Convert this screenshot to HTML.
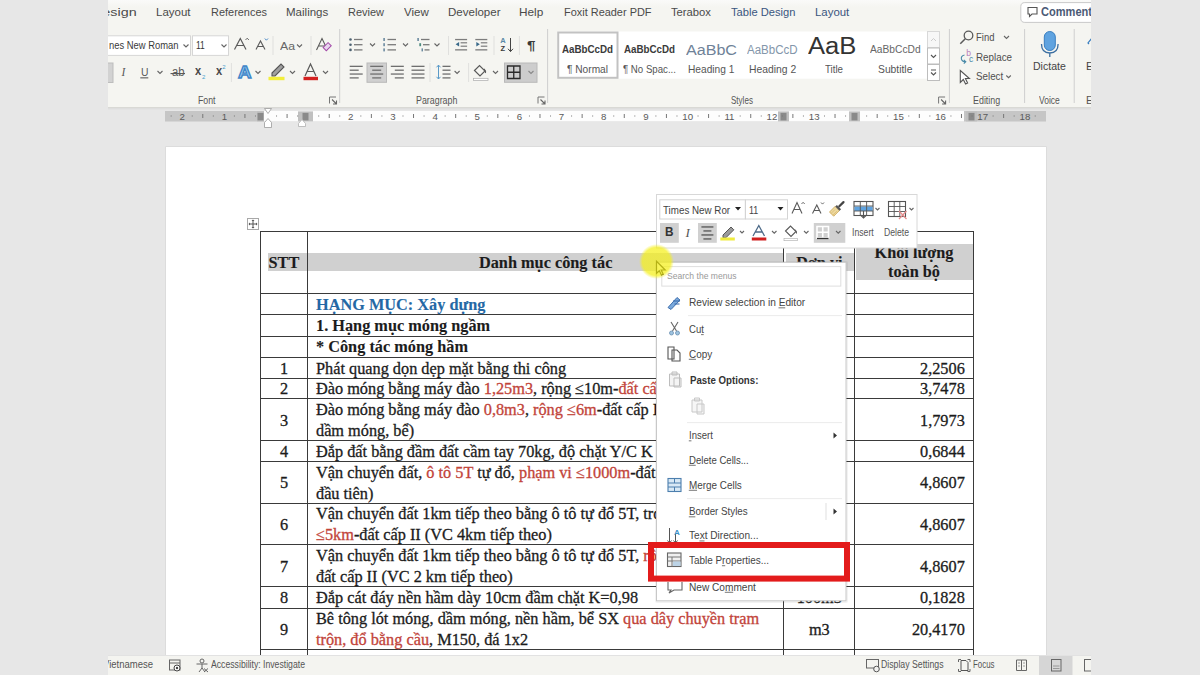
<!DOCTYPE html>
<html><head><meta charset="utf-8">
<style>
*{box-sizing:border-box;margin:0;padding:0}
html,body{width:1200px;height:675px;overflow:hidden;background:#e7e7e7;position:relative;font-family:"Liberation Sans",sans-serif}
.a{position:absolute}
.tx{position:absolute;white-space:pre}
#ribbon{left:108px;top:0;width:983px;height:107px;background:#f5f5f1;box-shadow:0 1px 0 #d9d9d5,0 2px 0 #dedede,0 3px 0 #e3e3e3}
#ruler{left:165px;top:111px;width:881px;height:10px;background:#c9c9c9}
#page{left:165.5px;top:147px;width:880.5px;height:528px;background:#fff;box-shadow:0 0 0 0.6px #d4d4d4}
.hl{background:#d0d0d0}
.tl{position:absolute;background:#3a3a3a}
.tt{position:absolute;font-family:"Liberation Serif",serif;font-size:16.3px;color:#1c1c1c;white-space:pre;line-height:21px;-webkit-text-stroke:0.3px currentColor}
.r{color:#c2443a}
.b{font-weight:bold;-webkit-text-stroke:0.1px currentColor}
#status{left:108px;top:655px;width:983px;height:20px;background:#f1f1ef}
.st{position:absolute;font-size:10.5px;color:#555;white-space:pre;top:4px}
</style></head><body>
<div id="ribbon" class="a" style="overflow:hidden"><div class="a" style="left:-108px;top:0;width:1200px;height:107px"><svg class="a" style="left:0;top:0" width="1200" height="130"><defs><linearGradient id="tg" x1="0" y1="0" x2="0" y2="1"><stop offset="0" stop-color="#fafaf9"/><stop offset="1" stop-color="#f5f5f1"/></linearGradient></defs><rect x="108" y="0" width="983" height="7" fill="url(#tg)"/><rect x="95.5" y="35.8" width="95" height="19.6" fill="#fff" stroke="#d6d6d6"/><rect x="192.5" y="35.8" width="36" height="19.6" fill="#fff" stroke="#d6d6d6"/><rect x="178.3" y="37" width="11.7" height="17.5" fill="#fff"/><path d="M183.5 44.5 l2.5 2.5 l2.5 -2.5" fill="none" stroke="#666" stroke-width="1.1"/><path d="M221.5 44.5 l2.5 2.5 l2.5 -2.5" fill="none" stroke="#666" stroke-width="1.1"/><path d="M234.5 49.5 L240.3 38.5 L246 49.5 M236.6 45.5 h7.4" fill="none" stroke="#5a5a5a" stroke-width="1.2"/><path d="M245.5 40 l1.7 -1.8 l1.7 1.8" fill="none" stroke="#5a5a5a" stroke-width="0.9"/><path d="M256 49.5 L260.5 41 L265 49.5 M257.7 46.5 h5.6" fill="none" stroke="#5a5a5a" stroke-width="1.1"/><path d="M264.8 38.5 l1.6 1.7 l1.6 -1.7" fill="none" stroke="#3c7fc2" stroke-width="0.9"/><rect x="272.5" y="36" width="1" height="19" fill="#e0e0de"/><path d="M297 44.5 l2.5 2.5 l2.5 -2.5" fill="none" stroke="#666" stroke-width="1.1"/><rect x="310.5" y="36" width="1" height="19" fill="#e0e0de"/><path d="M316.5 50 L322 38.5 L327.5 50 M318.5 46 h7" fill="none" stroke="#5a5a5a" stroke-width="1.1"/><rect x="325" y="43" width="4.5" height="7" transform="rotate(45 327 46.5)" fill="#e9d5ef" stroke="#a34aa8" stroke-width="1"/><rect x="100" y="63" width="13" height="19.5" fill="#d2d2d2" stroke="#bdbdbd"/><rect x="140.3" y="77.3" width="8" height="1.1" fill="#5a5a5a"/><path d="M157.5 71 l2.5 2.5 l2.5 -2.5" fill="none" stroke="#666" stroke-width="1.1"/><rect x="170.5" y="73" width="14.5" height="1.1" fill="#5a5a5a"/><rect x="230.9" y="63" width="1" height="19" fill="#e0e0de"/><path d="M255.5 71 l2.5 2.5 l2.5 -2.5" fill="none" stroke="#666" stroke-width="1.1"/><path d="M272 73 l9-9 l3 3 l-9 9 h-3z" fill="#a0a0a0" stroke="#555" stroke-width="1.1"/><rect x="268.5" y="76.8" width="16" height="3.4" fill="#f2ee3b"/><path d="M290 71 l2.5 2.5 l2.5 -2.5" fill="none" stroke="#666" stroke-width="1.1"/><path d="M305 76 L310.5 64 L316 76 M307 71.5 h7" fill="none" stroke="#5a5a5a" stroke-width="1.2"/><rect x="303.5" y="76.8" width="14.5" height="3.4" fill="#d32020"/><path d="M323 71 l2.5 2.5 l2.5 -2.5" fill="none" stroke="#666" stroke-width="1.1"/><path d="M329.5 103.5 v-6.5 h6.5" fill="none" stroke="#777" stroke-width="1"/><path d="M332.0 99.5 l4.5 4.5 M336.5 100.5 v3.5 h-3.5" fill="none" stroke="#666" stroke-width="1.1"/><rect x="339.2" y="29" width="1" height="74" fill="#cfcfcf"/><circle cx="350.5" cy="39.5" r="1.3" fill="#4d6272"/><rect x="354" y="38.85" width="8.5" height="1.3" fill="#7a7a7a"/><circle cx="350.5" cy="44.7" r="1.3" fill="#4d6272"/><rect x="354" y="44.050000000000004" width="8.5" height="1.3" fill="#7a7a7a"/><circle cx="350.5" cy="49.9" r="1.3" fill="#4d6272"/><rect x="354" y="49.25" width="8.5" height="1.3" fill="#7a7a7a"/><path d="M370 43.5 l2.5 2.5 l2.5 -2.5" fill="none" stroke="#666" stroke-width="1.1"/><rect x="383.3" y="38.0" width="1.6" height="3" fill="#6b8aa0"/><rect x="387.5" y="38.85" width="8.5" height="1.3" fill="#7a7a7a"/><rect x="383.3" y="43.2" width="1.6" height="3" fill="#6b8aa0"/><rect x="387.5" y="44.050000000000004" width="8.5" height="1.3" fill="#7a7a7a"/><rect x="383.3" y="48.4" width="1.6" height="3" fill="#6b8aa0"/><rect x="387.5" y="49.25" width="8.5" height="1.3" fill="#7a7a7a"/><path d="M403 43.5 l2.5 2.5 l2.5 -2.5" fill="none" stroke="#666" stroke-width="1.1"/><rect x="417.3" y="38" width="1.6" height="3" fill="#6b8aa0"/><rect x="421" y="38.85" width="8.5" height="1.3" fill="#7a7a7a"/><rect x="419.3" y="43.2" width="1.8" height="3" fill="#4d8a80"/><rect x="423" y="44.05" width="6.5" height="1.3" fill="#7a7a7a"/><rect x="421.5" y="48.4" width="1.5" height="3" fill="#6b8aa0"/><rect x="424.5" y="49.25" width="5" height="1.3" fill="#7a7a7a"/><path d="M434.5 43.5 l2.5 2.5 l2.5 -2.5" fill="none" stroke="#666" stroke-width="1.1"/><rect x="448.0" y="36" width="1" height="19" fill="#e0e0de"/><rect x="455.1" y="38.9" width="12" height="1.3" fill="#7d7d7d"/><rect x="460.6" y="42.2" width="6.5" height="1.2" fill="#7d7d7d"/><rect x="460.6" y="45.6" width="6.5" height="1.2" fill="#7d7d7d"/><rect x="455.1" y="49.2" width="12" height="1.3" fill="#7d7d7d"/><path d="M459.1 42 v4.5 l-3.5 -2.25 z" fill="#3a6a8a"/><rect x="475.3" y="38.9" width="12" height="1.3" fill="#7d7d7d"/><rect x="480.8" y="42.2" width="6.5" height="1.2" fill="#7d7d7d"/><rect x="480.8" y="45.6" width="6.5" height="1.2" fill="#7d7d7d"/><rect x="475.3" y="49.2" width="12" height="1.3" fill="#7d7d7d"/><path d="M476.3 42 v4.5 l3.5 -2.25 z" fill="#3a6a8a"/><rect x="493.5" y="36" width="1" height="19" fill="#e0e0de"/><path d="M510.5 38 v13.5 M508 48.8 l2.5 2.8 l2.5 -2.8" fill="none" stroke="#444" stroke-width="1"/><rect x="518.9" y="36" width="1" height="19" fill="#e0e0de"/><rect x="349.7" y="65.7" width="13" height="1.3" fill="#6f6f6f"/><rect x="349.7" y="69.55" width="9" height="1.3" fill="#6f6f6f"/><rect x="349.7" y="73.4" width="13" height="1.3" fill="#6f6f6f"/><rect x="349.7" y="77.25" width="9" height="1.3" fill="#6f6f6f"/><rect x="367" y="63" width="19.5" height="19.3" fill="#d0d0d0" stroke="#b9b9b9"/><rect x="370.2" y="65.7" width="13" height="1.3" fill="#6f6f6f"/><rect x="372.2" y="69.55" width="9" height="1.3" fill="#6f6f6f"/><rect x="370.2" y="73.4" width="13" height="1.3" fill="#6f6f6f"/><rect x="372.2" y="77.25" width="9" height="1.3" fill="#6f6f6f"/><rect x="390.8" y="65.7" width="13" height="1.3" fill="#6f6f6f"/><rect x="394.8" y="69.55" width="9" height="1.3" fill="#6f6f6f"/><rect x="390.8" y="73.4" width="13" height="1.3" fill="#6f6f6f"/><rect x="394.8" y="77.25" width="9" height="1.3" fill="#6f6f6f"/><rect x="411.5" y="65.7" width="13" height="1.3" fill="#6f6f6f"/><rect x="411.5" y="69.55" width="13" height="1.3" fill="#6f6f6f"/><rect x="411.5" y="73.4" width="13" height="1.3" fill="#6f6f6f"/><rect x="411.5" y="77.25" width="13" height="1.3" fill="#6f6f6f"/><rect x="429.5" y="63" width="1" height="19" fill="#e0e0de"/><path d="M438.5 65 v14 M436.5 67.3 l2 -2.2 l2 2.2 M436.5 76.8 l2 2.2 l2 -2.2" fill="none" stroke="#5a9ac8" stroke-width="1"/><rect x="442.5" y="65.7" width="8" height="1.3" fill="#6f6f6f"/><rect x="442.5" y="69.55" width="8" height="1.3" fill="#6f6f6f"/><rect x="442.5" y="73.4" width="8" height="1.3" fill="#6f6f6f"/><rect x="442.5" y="77.25" width="8" height="1.3" fill="#6f6f6f"/><path d="M454.6 71 l2.5 2.5 l2.5 -2.5" fill="none" stroke="#666" stroke-width="1.1"/><rect x="468.1" y="63" width="1" height="19" fill="#e0e0de"/><path d="M474.5 70.5 l5 -5 l5.5 5.5 l-5 5 z" fill="none" stroke="#5a5a5a" stroke-width="1.2"/><path d="M484 69 q2 2 1.5 4" fill="none" stroke="#5a5a5a" stroke-width="1.1"/><rect x="473.5" y="78.3" width="14.5" height="2.3" fill="#fff" stroke="#aaa" stroke-width="0.7"/><path d="M493 71 l2.5 2.5 l2.5 -2.5" fill="none" stroke="#666" stroke-width="1.1"/><rect x="504.5" y="63" width="32.5" height="19.3" fill="#cdcdcd" stroke="#b9b9b9"/><path d="M507.5 66 h12.5 v12.5 h-12.5 z M513.75 66 v12.5 M507.5 72.25 h12.5" fill="none" stroke="#2b2b2b" stroke-width="1.3"/><path d="M528.5 71 l2.5 2.5 l2.5 -2.5" fill="none" stroke="#888" stroke-width="1.1"/><path d="M538 103.5 v-6.5 h6.5" fill="none" stroke="#777" stroke-width="1"/><path d="M540.5 99.5 l4.5 4.5 M545 100.5 v3.5 h-3.5" fill="none" stroke="#666" stroke-width="1.1"/><rect x="547.1" y="29" width="1" height="74" fill="#cfcfcf"/><rect x="557.2" y="31.5" width="370" height="47.2" fill="#fff"/><rect x="558.2" y="32.5" width="59.3" height="45.3" fill="none" stroke="#c2c2c2" stroke-width="2"/><rect x="737" y="38" width="10" height="20" fill="#fff"/><rect x="797.6" y="38" width="9" height="20" fill="#fff"/><rect x="927.5" y="31.5" width="12" height="16" fill="#f7f7f7" stroke="#d8d8d8"/><rect x="927.5" y="48" width="12" height="16" fill="#fff" stroke="#bdbdbd"/><rect x="927.5" y="64.5" width="12" height="16" fill="#fff" stroke="#bdbdbd"/><path d="M931 41 l2.5 -2.5 l2.5 2.5" fill="none" stroke="#ccc" stroke-width="1"/><path d="M931 55 l2.5 2.5 l2.5 -2.5" fill="none" stroke="#555" stroke-width="1.1"/><path d="M931 70 h5 M931 72.5 l2.5 2.5 l2.5 -2.5" fill="none" stroke="#555" stroke-width="1.1"/><path d="M938.6 103.5 v-6.5 h6.5" fill="none" stroke="#777" stroke-width="1"/><path d="M941.1 99.5 l4.5 4.5 M945.6 100.5 v3.5 h-3.5" fill="none" stroke="#666" stroke-width="1.1"/><rect x="948.9" y="29" width="1" height="74" fill="#cfcfcf"/><circle cx="968.5" cy="35.5" r="4.3" fill="none" stroke="#5a5a5a" stroke-width="1.3"/><path d="M965.3 38.8 l-5 5" stroke="#5a5a5a" stroke-width="1.5"/><path d="M1004 36 l2.5 2.5 l2.5 -2.5" fill="none" stroke="#666" stroke-width="1.1"/><path d="M964.5 55 q-4 1 -3 4.5 q0.8 2.2 4.2 2.2 M963.8 59.8 l2 1.9 l-2 1.9" fill="none" stroke="#4a8aa8" stroke-width="1.1"/><path d="M960.3 70.5 v12 l3 -3 l2.3 4.5 l2 -1 l-2.2 -4.5 h4 z" fill="#fff" stroke="#555" stroke-width="1.1"/><path d="M1006.3 75.5 l2.25 2.25 l2.25 -2.25" fill="none" stroke="#666" stroke-width="1.1"/><rect x="1024.1" y="29" width="1" height="74" fill="#cfcfcf"/><rect x="1044.3" y="31.5" width="11" height="19" rx="5.5" fill="#5fa3e0" stroke="#3a7fc0" stroke-width="1"/><path d="M1041.5 44 q0 9 8.3 9 q8.3 0 8.3 -9 M1049.8 53 v4" fill="none" stroke="#3b6ea0" stroke-width="1.3"/><rect x="1073.7" y="29" width="1" height="74" fill="#cfcfcf"/><path d="M1092 38 l-4 5 l1 1" fill="none" stroke="#3a7fc0" stroke-width="1.2"/><rect x="1020.8" y="2.6" width="90" height="19.8" rx="4" fill="#fff" stroke="#c9c9c9"/><path d="M1028 7.5 h9 v6.5 h-5 l-2.5 2.5 v-2.5 h-1.5 z" fill="none" stroke="#555" stroke-width="1.1"/></svg><div class='tx' style="left:92px;top:5.89px;font-family:'Liberation Sans';font-size:11.3px;font-weight:normal;color:#4a4a4a;line-height:12.99px;transform:scaleX(1.2709);transform-origin:0 0;">Design</div>
<div class='tx' style="left:155.5px;top:5.89px;font-family:'Liberation Sans';font-size:11.3px;font-weight:normal;color:#4a4a4a;line-height:12.99px;transform:scaleX(1.0170);transform-origin:0 0;">Layout</div>
<div class='tx' style="left:210.5px;top:5.89px;font-family:'Liberation Sans';font-size:11.3px;font-weight:normal;color:#4a4a4a;line-height:12.99px;transform:scaleX(0.9692);transform-origin:0 0;">References</div>
<div class='tx' style="left:285.7px;top:5.89px;font-family:'Liberation Sans';font-size:11.3px;font-weight:normal;color:#4a4a4a;line-height:12.99px;transform:scaleX(1.0208);transform-origin:0 0;">Mailings</div>
<div class='tx' style="left:348px;top:5.89px;font-family:'Liberation Sans';font-size:11.3px;font-weight:normal;color:#4a4a4a;line-height:12.99px;transform:scaleX(0.9717);transform-origin:0 0;">Review</div>
<div class='tx' style="left:403.5px;top:5.89px;font-family:'Liberation Sans';font-size:11.3px;font-weight:normal;color:#4a4a4a;line-height:12.99px;transform:scaleX(1.0207);transform-origin:0 0;">View</div>
<div class='tx' style="left:447.5px;top:5.89px;font-family:'Liberation Sans';font-size:11.3px;font-weight:normal;color:#4a4a4a;line-height:12.99px;transform:scaleX(1.0194);transform-origin:0 0;">Developer</div>
<div class='tx' style="left:518.8px;top:5.89px;font-family:'Liberation Sans';font-size:11.3px;font-weight:normal;color:#4a4a4a;line-height:12.99px;transform:scaleX(1.0459);transform-origin:0 0;">Help</div>
<div class='tx' style="left:563.8px;top:5.89px;font-family:'Liberation Sans';font-size:11.3px;font-weight:normal;color:#4a4a4a;line-height:12.99px;transform:scaleX(0.9679);transform-origin:0 0;">Foxit Reader PDF</div>
<div class='tx' style="left:671.2px;top:5.89px;font-family:'Liberation Sans';font-size:11.3px;font-weight:normal;color:#4a4a4a;line-height:12.99px;transform:scaleX(0.9949);transform-origin:0 0;">Terabox</div>
<div class='tx' style="left:731.3px;top:5.89px;font-family:'Liberation Sans';font-size:11.3px;font-weight:normal;color:#3a5680;line-height:12.99px;transform:scaleX(0.9876);transform-origin:0 0;">Table Design</div>
<div class='tx' style="left:815px;top:5.89px;font-family:'Liberation Sans';font-size:11.3px;font-weight:normal;color:#3a5680;line-height:12.99px;transform:scaleX(1.0111);transform-origin:0 0;">Layout</div>
<div class='tx' style="left:109px;top:39.46px;font-family:'Liberation Sans';font-size:11px;font-weight:normal;color:#3a3a3a;line-height:12.65px;transform:scaleX(0.8546);transform-origin:0 0;">nes New Roman</div>
<div class='tx' style="left:195.8px;top:39.46px;font-family:'Liberation Sans';font-size:11px;font-weight:normal;color:#333;line-height:12.65px;transform:scaleX(0.7705);transform-origin:0 0;">11</div>
<div class='tx' style="left:279.5px;top:39.66px;font-family:'Liberation Sans';font-size:11px;font-weight:normal;color:#666;line-height:12.65px;transform:scaleX(1.1137);transform-origin:0 0;">Aa</div>
<div class='tx' style="left:121.5px;top:65.51px;font-family:'Liberation Serif';font-size:11.5px;font-weight:normal;color:#5a5a5a;line-height:13.22px;font-style:italic">I</div>
<div class='tx' style="left:140.5px;top:66.13px;font-family:'Liberation Sans';font-size:10.5px;font-weight:normal;color:#5a5a5a;line-height:12.07px;transform:scaleX(0.9877);transform-origin:0 0;">U</div>
<div class='tx' style="left:171.5px;top:65.48px;font-family:'Liberation Sans';font-size:12.5px;font-weight:normal;color:#5a5a5a;line-height:14.37px;transform:scaleX(0.8989);transform-origin:0 0;">ab</div>
<div class='tx' style="left:195.3px;top:65.44px;font-family:'Liberation Sans';font-size:12px;font-weight:bold;color:#4a4a4a;line-height:13.8px;transform:scaleX(0.9271);transform-origin:0 0;">x</div>
<div class='tx' style="left:202px;top:73.97px;font-family:'Liberation Sans';font-size:6px;font-weight:normal;color:#4a9fcf;line-height:6.9px;">2</div>
<div class='tx' style="left:215.9px;top:65.44px;font-family:'Liberation Sans';font-size:12px;font-weight:bold;color:#4a4a4a;line-height:13.8px;transform:scaleX(0.9271);transform-origin:0 0;">x</div>
<div class='tx' style="left:222.3px;top:63.97px;font-family:'Liberation Sans';font-size:6px;font-weight:normal;color:#4a9fcf;line-height:6.9px;">2</div>
<div class='tx' style="left:237.5px;top:62.83px;font-family:'Liberation Sans';font-size:17px;font-weight:bold;color:#9fd0f5;line-height:19.55px;transform:scaleX(1.0992);transform-origin:0 0;-webkit-text-stroke:1.3px #3f86c8">A</div>
<div class='tx' style="left:197.7px;top:93.83px;font-family:'Liberation Sans';font-size:10.5px;font-weight:normal;color:#555;line-height:12.07px;transform:scaleX(0.8327);transform-origin:0 0;">Font</div>
<div class='tx' style="left:500.3px;top:36.89px;font-family:'Liberation Sans';font-size:7.5px;font-weight:bold;color:#5a8aa8;line-height:8.62px;">A</div>
<div class='tx' style="left:500.5px;top:44.89px;font-family:'Liberation Sans';font-size:7.5px;font-weight:bold;color:#3a3a3a;line-height:8.62px;">Z</div>
<div class='tx' style="left:527px;top:38.98px;font-family:'Liberation Sans';font-size:12.5px;font-weight:bold;color:#3a3a3a;line-height:14.37px;transform:scaleX(1.2225);transform-origin:0 0;">¶</div>
<div class='tx' style="left:415.6px;top:93.83px;font-family:'Liberation Sans';font-size:10.5px;font-weight:normal;color:#555;line-height:12.07px;transform:scaleX(0.8441);transform-origin:0 0;">Paragraph</div>
<div class='tx' style="left:562.4px;top:42.85px;font-family:'Liberation Sans';font-size:10.8px;font-weight:bold;color:#3a3a3a;line-height:12.42px;transform:scaleX(0.9062);transform-origin:0 0;">AaBbCcDd</div>
<div class='tx' style="left:567px;top:63.33px;font-family:'Liberation Sans';font-size:10.5px;font-weight:normal;color:#555;line-height:12.07px;transform:scaleX(0.9668);transform-origin:0 0;">¶ Normal</div>
<div class='tx' style="left:624.3px;top:42.85px;font-family:'Liberation Sans';font-size:10.8px;font-weight:bold;color:#3a3a3a;line-height:12.42px;transform:scaleX(0.9044);transform-origin:0 0;">AaBbCcDd</div>
<div class='tx' style="left:622.7px;top:63.33px;font-family:'Liberation Sans';font-size:10.5px;font-weight:normal;color:#555;line-height:12.07px;transform:scaleX(0.9202);transform-origin:0 0;">¶ No Spac...</div>
<div class='tx' style="left:686px;top:40.52px;font-family:'Liberation Sans';font-size:15.5px;font-weight:normal;color:#6f8298;line-height:17.82px;transform:scaleX(1.0382);transform-origin:0 0;">AaBbC</div>
<div class='tx' style="left:687.6px;top:63.33px;font-family:'Liberation Sans';font-size:10.5px;font-weight:normal;color:#555;line-height:12.07px;transform:scaleX(0.9692);transform-origin:0 0;">Heading 1</div>
<div class='tx' style="left:747px;top:43.54px;font-family:'Liberation Sans';font-size:12px;font-weight:normal;color:#8396aa;line-height:13.8px;transform:scaleX(0.9585);transform-origin:0 0;">AaBbCcD</div>
<div class='tx' style="left:748.8px;top:63.33px;font-family:'Liberation Sans';font-size:10.5px;font-weight:normal;color:#555;line-height:12.07px;transform:scaleX(0.9859);transform-origin:0 0;">Heading 2</div>
<div class='tx' style="left:808px;top:32.85px;font-family:'Liberation Sans';font-size:23.5px;font-weight:normal;color:#333;line-height:27.02px;transform:scaleX(1.0896);transform-origin:0 0;">AaB</div>
<div class='tx' style="left:825px;top:63.33px;font-family:'Liberation Sans';font-size:10.5px;font-weight:normal;color:#555;line-height:12.07px;transform:scaleX(0.9253);transform-origin:0 0;">Title</div>
<div class='tx' style="left:870.4px;top:42.86px;font-family:'Liberation Sans';font-size:11px;font-weight:normal;color:#666;line-height:12.65px;transform:scaleX(0.9298);transform-origin:0 0;">AaBbCcDd</div>
<div class='tx' style="left:878px;top:63.33px;font-family:'Liberation Sans';font-size:10.5px;font-weight:normal;color:#555;line-height:12.07px;transform:scaleX(0.9820);transform-origin:0 0;">Subtitle</div>
<div class='tx' style="left:730.5px;top:93.83px;font-family:'Liberation Sans';font-size:10.5px;font-weight:normal;color:#555;line-height:12.07px;transform:scaleX(0.7659);transform-origin:0 0;">Styles</div>
<div class='tx' style="left:975.8px;top:30.96px;font-family:'Liberation Sans';font-size:11px;font-weight:normal;color:#4f4f4f;line-height:12.65px;transform:scaleX(0.8596);transform-origin:0 0;">Find</div>
<div class='tx' style="left:966.3px;top:48.67px;font-family:'Liberation Sans';font-size:8.5px;font-weight:normal;color:#b87ab8;line-height:9.77px;">b</div>
<div class='tx' style="left:969px;top:54.67px;font-family:'Liberation Sans';font-size:8.5px;font-weight:normal;color:#4a8aa8;line-height:9.77px;">c</div>
<div class='tx' style="left:975.8px;top:50.86px;font-family:'Liberation Sans';font-size:11px;font-weight:normal;color:#4f4f4f;line-height:12.65px;transform:scaleX(0.8920);transform-origin:0 0;">Replace</div>
<div class='tx' style="left:975.8px;top:70.46px;font-family:'Liberation Sans';font-size:11px;font-weight:normal;color:#4f4f4f;line-height:12.65px;transform:scaleX(0.8895);transform-origin:0 0;">Select</div>
<div class='tx' style="left:973.4px;top:93.83px;font-family:'Liberation Sans';font-size:10.5px;font-weight:normal;color:#555;line-height:12.07px;transform:scaleX(0.8471);transform-origin:0 0;">Editing</div>
<div class='tx' style="left:1033.4px;top:60.06px;font-family:'Liberation Sans';font-size:11px;font-weight:normal;color:#444;line-height:12.65px;transform:scaleX(0.9577);transform-origin:0 0;">Dictate</div>
<div class='tx' style="left:1039px;top:93.83px;font-family:'Liberation Sans';font-size:10.5px;font-weight:normal;color:#555;line-height:12.07px;transform:scaleX(0.8097);transform-origin:0 0;">Voice</div>
<div class='tx' style="left:1086px;top:60.06px;font-family:'Liberation Sans';font-size:11px;font-weight:normal;color:#444;line-height:12.65px;">E</div>
<div class='tx' style="left:1086px;top:93.83px;font-family:'Liberation Sans';font-size:10.5px;font-weight:normal;color:#555;line-height:12.07px;">E</div>
<div class='tx' style="left:1040.8px;top:5.74px;font-family:'Liberation Sans';font-size:12px;font-weight:bold;color:#4b5a76;line-height:13.8px;transform:scaleX(0.9215);transform-origin:0 0;">Comment</div></div></div>
<svg class="a" style="left:0;top:0" width="1200" height="675"><rect x="165" y="111" width="881" height="10.5" fill="#c6c6c6"/><rect x="264" y="111" width="700" height="10.5" fill="#fdfdfd"/><rect x="257" y="111.4" width="7" height="10" fill="#c0c0c0"/><rect x="257.5" y="112.9" width="6" height="7.5" fill="#8a8a8a"/><rect x="298" y="111.4" width="15" height="10" fill="#c0c0c0"/><rect x="302.5" y="112.9" width="6" height="7.5" fill="#8a8a8a"/><rect x="778" y="111.4" width="11" height="10" fill="#c0c0c0"/><rect x="780.5" y="112.9" width="6" height="7.5" fill="#8a8a8a"/><rect x="849" y="111.4" width="11" height="10" fill="#c0c0c0"/><rect x="851.5" y="112.9" width="6" height="7.5" fill="#8a8a8a"/><rect x="966" y="111.4" width="11" height="10" fill="#c0c0c0"/><rect x="968.5" y="112.9" width="6" height="7.5" fill="#8a8a8a"/><path d="M264.5 108.5 h7 l-3.5 5 z M264.5 127.5 h7 v-5 l-3.5 -4 l-3.5 4 z" fill="#fff" stroke="#9a9a9a" stroke-width="0.8"/><path d="M298.5 126.5 h7 v-3 l-3.5 -4 l-3.5 4 z" fill="#fff" stroke="#b0b0b0" stroke-width="0.8"/><rect x="170.66250000000002" y="115.5" width="1" height="1" fill="#777"/><rect x="191.73749999999998" y="115.5" width="1" height="1" fill="#777"/><rect x="202.27499999999998" y="114" width="1" height="4" fill="#777"/><rect x="212.8125" y="115.5" width="1" height="1" fill="#777"/><rect x="233.8875" y="115.5" width="1" height="1" fill="#777"/><rect x="244.42499999999998" y="114" width="1" height="4" fill="#777"/><rect x="254.96249999999998" y="115.5" width="1" height="1" fill="#777"/><rect x="276.0375" y="115.5" width="1" height="1" fill="#777"/><rect x="286.575" y="114" width="1" height="4" fill="#777"/><rect x="297.1125" y="115.5" width="1" height="1" fill="#777"/><rect x="318.1875" y="115.5" width="1" height="1" fill="#777"/><rect x="328.72499999999997" y="114" width="1" height="4" fill="#777"/><rect x="339.2625" y="115.5" width="1" height="1" fill="#777"/><rect x="360.33750000000003" y="115.5" width="1" height="1" fill="#777"/><rect x="370.875" y="114" width="1" height="4" fill="#777"/><rect x="381.4125" y="115.5" width="1" height="1" fill="#777"/><rect x="402.4875" y="115.5" width="1" height="1" fill="#777"/><rect x="413.025" y="114" width="1" height="4" fill="#777"/><rect x="423.5625" y="115.5" width="1" height="1" fill="#777"/><rect x="444.63750000000005" y="115.5" width="1" height="1" fill="#777"/><rect x="455.175" y="114" width="1" height="4" fill="#777"/><rect x="465.71250000000003" y="115.5" width="1" height="1" fill="#777"/><rect x="486.7875" y="115.5" width="1" height="1" fill="#777"/><rect x="497.325" y="114" width="1" height="4" fill="#777"/><rect x="507.8625" y="115.5" width="1" height="1" fill="#777"/><rect x="528.9375" y="115.5" width="1" height="1" fill="#777"/><rect x="539.475" y="114" width="1" height="4" fill="#777"/><rect x="550.0124999999999" y="115.5" width="1" height="1" fill="#777"/><rect x="571.0875" y="115.5" width="1" height="1" fill="#777"/><rect x="581.625" y="114" width="1" height="4" fill="#777"/><rect x="592.1624999999999" y="115.5" width="1" height="1" fill="#777"/><rect x="613.2375000000001" y="115.5" width="1" height="1" fill="#777"/><rect x="623.7750000000001" y="114" width="1" height="4" fill="#777"/><rect x="634.3125" y="115.5" width="1" height="1" fill="#777"/><rect x="655.3874999999999" y="115.5" width="1" height="1" fill="#777"/><rect x="665.925" y="114" width="1" height="4" fill="#777"/><rect x="676.4624999999999" y="115.5" width="1" height="1" fill="#777"/><rect x="697.5375" y="115.5" width="1" height="1" fill="#777"/><rect x="708.075" y="114" width="1" height="4" fill="#777"/><rect x="718.6125" y="115.5" width="1" height="1" fill="#777"/><rect x="739.6875" y="115.5" width="1" height="1" fill="#777"/><rect x="750.225" y="114" width="1" height="4" fill="#777"/><rect x="760.7624999999999" y="115.5" width="1" height="1" fill="#777"/><rect x="781.8375" y="115.5" width="1" height="1" fill="#777"/><rect x="792.375" y="114" width="1" height="4" fill="#777"/><rect x="802.9124999999999" y="115.5" width="1" height="1" fill="#777"/><rect x="823.9875" y="115.5" width="1" height="1" fill="#777"/><rect x="834.525" y="114" width="1" height="4" fill="#777"/><rect x="845.0624999999999" y="115.5" width="1" height="1" fill="#777"/><rect x="866.1375" y="115.5" width="1" height="1" fill="#777"/><rect x="876.6750000000001" y="114" width="1" height="4" fill="#777"/><rect x="887.2125" y="115.5" width="1" height="1" fill="#777"/><rect x="908.2875" y="115.5" width="1" height="1" fill="#777"/><rect x="918.825" y="114" width="1" height="4" fill="#777"/><rect x="929.3625" y="115.5" width="1" height="1" fill="#777"/><rect x="950.4375" y="115.5" width="1" height="1" fill="#777"/><rect x="960.975" y="114" width="1" height="4" fill="#777"/><rect x="971.5124999999999" y="115.5" width="1" height="1" fill="#777"/><rect x="992.5875" y="115.5" width="1" height="1" fill="#777"/><rect x="1003.125" y="114" width="1" height="4" fill="#777"/><rect x="1013.6624999999999" y="115.5" width="1" height="1" fill="#777"/><rect x="1034.7374999999997" y="115.5" width="1" height="1" fill="#777"/></svg><div class='tx' style="left:179.5px;top:111.36px;font-family:'Liberation Sans';font-size:9.7px;font-weight:normal;color:#5a5a5a;line-height:11.15px;">2</div>
<div class='tx' style="left:221.65px;top:111.36px;font-family:'Liberation Sans';font-size:9.7px;font-weight:normal;color:#5a5a5a;line-height:11.15px;">1</div>
<div class='tx' style="left:348.1px;top:111.36px;font-family:'Liberation Sans';font-size:9.7px;font-weight:normal;color:#5a5a5a;line-height:11.15px;">2</div>
<div class='tx' style="left:390.25px;top:111.36px;font-family:'Liberation Sans';font-size:9.7px;font-weight:normal;color:#5a5a5a;line-height:11.15px;">3</div>
<div class='tx' style="left:432.40000000000003px;top:111.36px;font-family:'Liberation Sans';font-size:9.7px;font-weight:normal;color:#5a5a5a;line-height:11.15px;">4</div>
<div class='tx' style="left:474.55px;top:111.36px;font-family:'Liberation Sans';font-size:9.7px;font-weight:normal;color:#5a5a5a;line-height:11.15px;">5</div>
<div class='tx' style="left:516.6999999999999px;top:111.36px;font-family:'Liberation Sans';font-size:9.7px;font-weight:normal;color:#5a5a5a;line-height:11.15px;">6</div>
<div class='tx' style="left:558.8499999999999px;top:111.36px;font-family:'Liberation Sans';font-size:9.7px;font-weight:normal;color:#5a5a5a;line-height:11.15px;">7</div>
<div class='tx' style="left:601.0px;top:111.36px;font-family:'Liberation Sans';font-size:9.7px;font-weight:normal;color:#5a5a5a;line-height:11.15px;">8</div>
<div class='tx' style="left:643.1499999999999px;top:111.36px;font-family:'Liberation Sans';font-size:9.7px;font-weight:normal;color:#5a5a5a;line-height:11.15px;">9</div>
<div class='tx' style="left:682.3px;top:111.36px;font-family:'Liberation Sans';font-size:9.7px;font-weight:normal;color:#5a5a5a;line-height:11.15px;">10</div>
<div class='tx' style="left:724.4499999999999px;top:111.36px;font-family:'Liberation Sans';font-size:9.7px;font-weight:normal;color:#5a5a5a;line-height:11.15px;">11</div>
<div class='tx' style="left:766.5999999999999px;top:111.36px;font-family:'Liberation Sans';font-size:9.7px;font-weight:normal;color:#5a5a5a;line-height:11.15px;">12</div>
<div class='tx' style="left:808.7499999999999px;top:111.36px;font-family:'Liberation Sans';font-size:9.7px;font-weight:normal;color:#5a5a5a;line-height:11.15px;">13</div>
<div class='tx' style="left:893.05px;top:111.36px;font-family:'Liberation Sans';font-size:9.7px;font-weight:normal;color:#5a5a5a;line-height:11.15px;">15</div>
<div class='tx' style="left:935.1999999999999px;top:111.36px;font-family:'Liberation Sans';font-size:9.7px;font-weight:normal;color:#5a5a5a;line-height:11.15px;">16</div>
<div class='tx' style="left:977.3499999999999px;top:111.36px;font-family:'Liberation Sans';font-size:9.7px;font-weight:normal;color:#5a5a5a;line-height:11.15px;">17</div>
<div class='tx' style="left:1019.4999999999998px;top:111.36px;font-family:'Liberation Sans';font-size:9.7px;font-weight:normal;color:#5a5a5a;line-height:11.15px;">18</div>
<div id="page" class="a"></div>

<!-- table -->
<div id="tbl">
<div class="a hl" style="left:268px;top:253.4px;width:39.5px;height:17.6px"></div>
<div class="a hl" style="left:308.3px;top:253.4px;width:475px;height:17.6px"></div>
<div class="a hl" style="left:785.5px;top:253.4px;width:68.5px;height:17.6px"></div>
<div class="a hl" style="left:856px;top:244px;width:116.7px;height:36px"></div>
<div class="tl" style="left:260.7px;top:230.5px;width:713.5px;height:1.2px"></div>
<div class="tl" style="left:260.7px;top:293.0px;width:713.5px;height:1.2px"></div>
<div class="tl" style="left:260.7px;top:314.2px;width:713.5px;height:1.2px"></div>
<div class="tl" style="left:260.7px;top:335.5px;width:713.5px;height:1.2px"></div>
<div class="tl" style="left:260.7px;top:356.5px;width:713.5px;height:1.2px"></div>
<div class="tl" style="left:260.7px;top:377.8px;width:713.5px;height:1.2px"></div>
<div class="tl" style="left:260.7px;top:398.2px;width:713.5px;height:1.2px"></div>
<div class="tl" style="left:260.7px;top:440.0px;width:713.5px;height:1.2px"></div>
<div class="tl" style="left:260.7px;top:461.2px;width:713.5px;height:1.2px"></div>
<div class="tl" style="left:260.7px;top:502.5px;width:713.5px;height:1.2px"></div>
<div class="tl" style="left:260.7px;top:544.0px;width:713.5px;height:1.2px"></div>
<div class="tl" style="left:260.7px;top:586.2px;width:713.5px;height:1.2px"></div>
<div class="tl" style="left:260.7px;top:607.5px;width:713.5px;height:1.2px"></div>
<div class="tl" style="left:260.7px;top:649.0px;width:713.5px;height:1.2px"></div>
<div class="tl" style="left:260.2px;top:231.0px;width:1.2px;height:444.0px"></div>
<div class="tl" style="left:307.0px;top:231.0px;width:1.2px;height:444.0px"></div>
<div class="tl" style="left:783.3px;top:231.0px;width:1.2px;height:444.0px"></div>
<div class="tl" style="left:854.3px;top:231.0px;width:1.2px;height:444.0px"></div>
<div class="tl" style="left:972.7px;top:231.0px;width:1.2px;height:444.0px"></div>
<div class="tt" style="left:316px;top:294.0px"><span class="b" style="color:#2468a5">HẠNG MỤC: Xây dựng</span></div>
<div class="tt" style="left:316px;top:315.3px"><span class="b">1. Hạng mục móng ngầm</span></div>
<div class="tt" style="left:316px;top:336.4px"><span class="b">* Công tác móng hầm</span></div>
<div class="tt" style="left:316px;top:357.6px">Phát quang dọn dẹp mặt bằng thi công</div>
<div class="tt" style="left:260.7px;width:46.80000000000001px;text-align:center;top:357.6px">1</div>
<div class="tt" style="left:854.8px;width:110.0px;text-align:right;top:357.6px">2,2506</div>
<div class="tt" style="left:316px;top:378.4px">Đào móng bằng máy đào <span class="r">1,25m3</span>, rộng ≤10m-<span class="r">đất cấp I</span></div>
<div class="tt" style="left:260.7px;width:46.80000000000001px;text-align:center;top:378.4px">2</div>
<div class="tt" style="left:854.8px;width:110.0px;text-align:right;top:378.4px">3,7478</div>
<div class="tt" style="left:316px;top:399.1px">Đào móng bằng máy đào <span class="r">0,8m3</span>, <span class="r">rộng ≤6m</span>-đất cấp II</div>
<div class="tt" style="left:316px;top:419.9px">dầm móng, bể)</div>
<div class="tt" style="left:260.7px;width:46.80000000000001px;text-align:center;top:409.5px">3</div>
<div class="tt" style="left:854.8px;width:110.0px;text-align:right;top:409.5px">1,7973</div>
<div class="tt" style="left:316px;top:441.0px">Đắp đất bằng đầm đất cầm tay 70kg, độ chặt Y/C K</div>
<div class="tt" style="left:260.7px;width:46.80000000000001px;text-align:center;top:441.0px">4</div>
<div class="tt" style="left:854.8px;width:110.0px;text-align:right;top:441.0px">0,6844</div>
<div class="tt" style="left:316px;top:461.9px">Vận chuyển đất, <span class="r">ô tô 5T</span> tự đổ, <span class="r">phạm vi ≤1000m</span>-đất cấp II</div>
<div class="tt" style="left:316px;top:482.7px">đầu tiên)</div>
<div class="tt" style="left:260.7px;width:46.80000000000001px;text-align:center;top:472.3px">5</div>
<div class="tt" style="left:854.8px;width:110.0px;text-align:right;top:472.3px">4,8607</div>
<div class="tt" style="left:316px;top:503.2px">Vận chuyển đất 1km tiếp theo bằng ô tô tự đổ 5T, trong</div>
<div class="tt" style="left:316px;top:524.0px"><span class="r">≤5km</span>-đất cấp II (VC 4km tiếp theo)</div>
<div class="tt" style="left:260.7px;width:46.80000000000001px;text-align:center;top:513.6px">6</div>
<div class="tt" style="left:854.8px;width:110.0px;text-align:right;top:513.6px">4,8607</div>
<div class="tt" style="left:316px;top:545.1px">Vận chuyển đất 1km tiếp theo bằng ô tô tự đổ 5T, <span class="r">rộng</span></div>
<div class="tt" style="left:316px;top:565.9px">đất cấp II (VC 2 km tiếp theo)</div>
<div class="tt" style="left:260.7px;width:46.80000000000001px;text-align:center;top:555.5px">7</div>
<div class="tt" style="left:854.8px;width:110.0px;text-align:right;top:555.5px">4,8607</div>
<div class="tt" style="left:316px;top:587.2px">Đắp cát đáy nền hầm dày 10cm đầm chặt K=0,98</div>
<div class="tt" style="left:260.7px;width:46.80000000000001px;text-align:center;top:587.2px">8</div>
<div class="tt" style="left:783.8px;width:71.0px;text-align:center;top:587.2px">100m3</div>
<div class="tt" style="left:854.8px;width:110.0px;text-align:right;top:587.2px">0,1828</div>
<div class="tt" style="left:316px;top:608.2px">Bê tông lót móng, dầm móng, nền hầm, bể SX <span class="r">qua dây chuyền trạm</span></div>
<div class="tt" style="left:316px;top:629.0px"><span class="r">trộn, đổ bằng cầu</span>, M150, đá 1x2</div>
<div class="tt" style="left:260.7px;width:46.80000000000001px;text-align:center;top:618.6px">9</div>
<div class="tt" style="left:783.8px;width:71.0px;text-align:center;top:618.6px">m3</div>
<div class="tt" style="left:854.8px;width:110.0px;text-align:right;top:618.6px">20,4170</div>
<div class="tt" style="left:316px;top:652.8px">Bê tông móng, giằng móng, đổ bê tông hầm, trộn bằng máy</div>
<div class="tt" style="left:316px;top:673.5px">trộn, đổ bằng cầu, M200, đá 1x2</div>
<div class="tt" style="left:260.7px;width:46.80000000000001px;text-align:center;top:663.1px">10</div>
<div class="tt" style="left:783.8px;width:71.0px;text-align:center;top:663.1px">m3</div>
<div class="tt" style="left:854.8px;width:110.0px;text-align:right;top:663.1px">20,4170</div>
<div class="tt b" style="left:268.5px;top:252px">STT</div>
<div class="tt b" style="left:307.5px;width:476.29999999999995px;text-align:center;top:252px">Danh mục công tác</div>
<div class="tt b" style="left:783.8px;width:71.0px;text-align:center;top:252px">Đơn vị</div>
<div class="tt b" style="left:854.8px;width:118.40000000000009px;text-align:center;top:243px;line-height:19px">Khối lượng
toàn bộ</div>
<div class="a" style="left:247px;top:218.3px;width:12px;height:12px;border:1px solid #a8a8a8;background:#fff"><svg width="10" height="10" style="position:absolute;left:0;top:0"><path d="M5 1v8M1 5h8" stroke="#555" stroke-width="1"/><path d="M5 0.5l-1.5 1.5h3zM5 9.5l-1.5-1.5h3zM0.5 5l1.5-1.5v3zM9.5 5l-1.5-1.5v3z" fill="#555"/></svg></div>
</div>

<svg class="a" style="left:0;top:0" width="1200" height="675"><rect x="656.5" y="194.5" width="260.5" height="53.5" fill="#fff" stroke="#d8d8d8"/><rect x="659.8" y="199.8" width="85.5" height="19.2" fill="#fff" stroke="#d4d4d4"/><rect x="745.5" y="199.8" width="42" height="19.2" fill="#fff" stroke="#d4d4d4"/><path d="M735 207 h6 l-3 3.5 z M777.5 207 h6 l-3 3.5z" fill="#222"/><path d="M792 213.5 L797 202.5 L802 213.5 M794 209.5 h6" fill="none" stroke="#5a5a5a" stroke-width="1.1"/><path d="M801.5 204 l1.6 -1.7 l1.6 1.7" fill="none" stroke="#5a5a5a" stroke-width="0.9"/><path d="M812.5 213.5 L816.8 205 L821 213.5 M814 210.5 h5.5" fill="none" stroke="#5a5a5a" stroke-width="1.1"/><path d="M821 202.5 l1.5 1.6 l1.5 -1.6" fill="none" stroke="#5a5a5a" stroke-width="0.9"/><path d="M829.5 212 l4.2 4.2 l5.6 -5.6 l-4.2 -4.2 z" fill="#ecd9a0" stroke="#c9a14a" stroke-width="0.8"/><path d="M831 213.5 l4 -4 M832.8 215.2 l4 -4" stroke="#d8b060" stroke-width="0.6"/><path d="M835.3 206.6 l4.2 4.2 l1.6 -1.6 l-4.2 -4.2 z" fill="#555"/><path d="M839.3 206.3 l4.2 -4.2" stroke="#444" stroke-width="2.2" stroke-linecap="round"/><rect x="854" y="201.5" width="19" height="14" fill="#fff" stroke="#555" stroke-width="1.1"/><rect x="854.5" y="206.5" width="18" height="4.5" fill="#5fa3e0"/><path d="M854 206 h19 M854 211 h19 M860.3 201.5 v14 M866.6 201.5 v14" stroke="#555" stroke-width="0.9"/><path d="M863.5 211 v7 M860.5 215 l3 3 l3 -3" fill="none" stroke="#555" stroke-width="1.1"/><path d="M875.5 208 l2.0 2.0 l2.0 -2.0" fill="none" stroke="#666" stroke-width="1.1"/><rect x="888.5" y="201.5" width="17" height="15" fill="#fff" stroke="#555" stroke-width="1.1"/><path d="M888.5 206.5 h17 M888.5 211.5 h17 M894.2 201.5 v15 M899.8 201.5 v15" stroke="#555" stroke-width="0.9"/><path d="M899 211 l7.5 8 M906.5 211 l-7.5 8" stroke="#e48a8a" stroke-width="1.2"/><path d="M909.5 208 l2.0 2.0 l2.0 -2.0" fill="none" stroke="#666" stroke-width="1.1"/><rect x="660" y="223" width="18.8" height="19.8" fill="#d0d0d0"/><rect x="698" y="223" width="18.8" height="19.8" fill="#d0d0d0"/><rect x="701.4" y="226.3" width="12" height="1.3" fill="#555"/><rect x="703.4" y="230.3" width="8" height="1.3" fill="#555"/><rect x="701.4" y="234.3" width="12" height="1.3" fill="#555"/><rect x="703.4" y="238.3" width="8" height="1.3" fill="#555"/><path d="M723 235 l8 -8 l2.8 2.8 l-8 8 h-2.8z" fill="#9a9a9a" stroke="#555" stroke-width="1"/><rect x="720.3" y="237.5" width="14.5" height="3" fill="#f0ec40"/><path d="M740 231 l2.0 2.0 l2.0 -2.0" fill="none" stroke="#666" stroke-width="1.1"/><path d="M753 236 L758.8 225.5 L764.5 236 M755 232 h7.5" fill="none" stroke="#4d6a88" stroke-width="1.3"/><rect x="751.8" y="237.5" width="14.5" height="3" fill="#d02020"/><path d="M772 231 l2.25 2.25 l2.25 -2.25" fill="none" stroke="#666" stroke-width="1.1"/><path d="M785.5 231 l5 -5 l5.5 5.5 l-5 5 z" fill="none" stroke="#5a5a5a" stroke-width="1.1"/><path d="M795 229.5 q2 2 1.5 4" fill="none" stroke="#5a5a5a" stroke-width="1"/><rect x="784" y="238.5" width="13.5" height="2.2" fill="#fff" stroke="#aaa" stroke-width="0.6"/><path d="M804 231 l2.25 2.25 l2.25 -2.25" fill="none" stroke="#666" stroke-width="1.1"/><rect x="813.8" y="223" width="31.5" height="19.8" fill="#d0d0d0"/><path d="M817 226.5 h11.5 v11.5 h-11.5 z M822.75 226.5 v11.5 M817 232.25 h11.5" fill="none" stroke="#fff" stroke-width="1.6"/><path d="M817 238.5 h11.5" stroke="#333" stroke-width="1.3"/><path d="M836 231 l2.25 2.25 l2.25 -2.25" fill="none" stroke="#666" stroke-width="1.1"/><rect x="655" y="261" width="193" height="342" fill="#000" opacity="0.05" rx="2"/><rect x="656.5" y="262.3" width="189.5" height="338.5" fill="#fff" stroke="#c8c8c8"/><rect x="661.8" y="266.6" width="179" height="19.5" fill="#fff" stroke="#dedede"/><rect x="778.48" y="307.40000000000003" width="6.77" height="0.9" fill="#666"/><rect x="701.05" y="334.20000000000005" width="2.65" height="0.9" fill="#666"/><rect x="688.80" y="358.8" width="7.19" height="0.9" fill="#666"/><rect x="688.80" y="440.40000000000003" width="2.65" height="0.9" fill="#666"/><rect x="688.80" y="464.8" width="6.94" height="0.9" fill="#666"/><rect x="688.80" y="489.8" width="8.25" height="0.9" fill="#666"/><rect x="688.80" y="516.4" width="6.53" height="0.9" fill="#666"/><rect x="699.46" y="540.5" width="5.04" height="0.9" fill="#666"/><rect x="721.91" y="565.3000000000001" width="3.31" height="0.9" fill="#666"/><rect x="724.79" y="591.8000000000001" width="8.42" height="0.9" fill="#666"/><rect x="688" y="315.1" width="154" height="1" fill="#ececec"/><rect x="687" y="422.1" width="155" height="1" fill="#ececec"/><rect x="687" y="498.1" width="155" height="1" fill="#ececec"/><path d="M833.5 432.5 l3.5 3 l-3.5 3 z M833.5 508.5 l3.5 3 l-3.5 3 z" fill="#333"/><rect x="825.5" y="503" width="1" height="17" fill="#e0e0e0"/><path d="M668 307.5 l9 -10 l3 2.5 l-9 9.5 z" fill="#7aa9dc" stroke="#3467a8" stroke-width="0.9"/><path d="M673 301 h7 M674.5 304 h5" stroke="#3467a8" stroke-width="1"/><path d="M671 322 l5.5 9 M678 322 l-5.5 9" stroke="#666" stroke-width="1.1"/><circle cx="671.5" cy="333" r="2" fill="#9ec3e0" stroke="#6a8fb0" stroke-width="0.8"/><circle cx="677.5" cy="333" r="2" fill="#9ec3e0" stroke="#6a8fb0" stroke-width="0.8"/><path d="M668 347 h6 v12 h-6 z M672 350 h5 l3 3 v8 h-8 z" fill="#fff" stroke="#555" stroke-width="1.1"/><path d="M669.5 374 h10 v12 h-10 z M672 372 h5 v3 h-5 z M674 378 h7 v9 h-7 z" fill="#f4f4f4" stroke="#bdbdbd" stroke-width="1"/><path d="M692 400 h10 v12 h-10 z M694.5 398 h5 v3 h-5 z M697 404 h7 v10 h-7 z" fill="#f6f6f6" stroke="#c8c8c8" stroke-width="1"/><rect x="668" y="478.5" width="13" height="13" fill="#d8e8f5" stroke="#4d7fae" stroke-width="1.1"/><path d="M668 483 h13 M668 487 h13 M674.5 478.5 v4.5 M674.5 487 v4.5" stroke="#4d7fae" stroke-width="1"/><path d="M669.5 528 v15 M667.5 540.5 l2 2.5 l2 -2.5 M675.5 534 v9 M673.5 540.5 l2 2.5 l2 -2.5" fill="none" stroke="#555" stroke-width="1"/><rect x="667.5" y="553" width="13.5" height="13.5" fill="#f0f0f0" stroke="#666" stroke-width="1.1"/><path d="M667.5 557 h13.5 M667.5 561 h13.5 M672 557 v9.5" stroke="#777" stroke-width="1"/><rect x="673" y="561.5" width="7.5" height="4.5" fill="#bcd3e6"/><path d="M668 582 v8 h3 l-2 3 l5 -3 h8 v-8" fill="none" stroke="#666" stroke-width="1.1"/></svg><div class='tx' style="left:662.5px;top:203.53px;font-family:'Liberation Sans';font-size:10.5px;font-weight:normal;color:#444;line-height:12.07px;transform:scaleX(0.9326);transform-origin:0 0;">Times New Ror</div>
<div class='tx' style="left:748.9px;top:203.53px;font-family:'Liberation Sans';font-size:10.5px;font-weight:normal;color:#444;line-height:12.07px;transform:scaleX(0.8527);transform-origin:0 0;">11</div>
<div class='tx' style="left:664.5px;top:226.44px;font-family:'Liberation Sans';font-size:12px;font-weight:bold;color:#333;line-height:13.8px;transform:scaleX(0.9802);transform-origin:0 0;">B</div>
<div class='tx' style="left:685.5px;top:225.64px;font-family:'Liberation Serif';font-size:13px;font-weight:normal;color:#555;line-height:14.95px;font-style:italic">I</div>
<div class='tx' style="left:852.3px;top:227.09px;font-family:'Liberation Sans';font-size:10px;font-weight:normal;color:#555;line-height:11.5px;transform:scaleX(0.8675);transform-origin:0 0;">Insert</div>
<div class='tx' style="left:884.4px;top:227.09px;font-family:'Liberation Sans';font-size:10px;font-weight:normal;color:#555;line-height:11.5px;transform:scaleX(0.8683);transform-origin:0 0;">Delete</div>
<div class='tx' style="left:666.8px;top:270.85px;font-family:'Liberation Sans';font-size:9.5px;font-weight:normal;color:#9a9a9a;line-height:10.92px;transform:scaleX(0.9013);transform-origin:0 0;">Search the menus</div>
<div class='tx' style="left:688.8px;top:296.13px;font-family:'Liberation Sans';font-size:10.5px;font-weight:normal;color:#444;line-height:12.07px;transform:scaleX(0.9664);transform-origin:0 0;">Review selection in Editor</div>
<div class='tx' style="left:688.8px;top:322.93px;font-family:'Liberation Sans';font-size:10.5px;font-weight:normal;color:#444;line-height:12.07px;transform:scaleX(0.9117);transform-origin:0 0;">Cut</div>
<div class='tx' style="left:688.8px;top:347.53px;font-family:'Liberation Sans';font-size:10.5px;font-weight:normal;color:#444;line-height:12.07px;transform:scaleX(0.9463);transform-origin:0 0;">Copy</div>
<div class='tx' style="left:689.6px;top:373.53px;font-family:'Liberation Sans';font-size:10.5px;font-weight:bold;color:#333;line-height:12.07px;transform:scaleX(0.9230);transform-origin:0 0;">Paste Options:</div>
<div class='tx' style="left:688.8px;top:429.13px;font-family:'Liberation Sans';font-size:10.5px;font-weight:normal;color:#444;line-height:12.07px;transform:scaleX(0.9061);transform-origin:0 0;">Insert</div>
<div class='tx' style="left:688.8px;top:453.53px;font-family:'Liberation Sans';font-size:10.5px;font-weight:normal;color:#444;line-height:12.07px;transform:scaleX(0.9134);transform-origin:0 0;">Delete Cells...</div>
<div class='tx' style="left:688.8px;top:478.53px;font-family:'Liberation Sans';font-size:10.5px;font-weight:normal;color:#444;line-height:12.07px;transform:scaleX(0.9423);transform-origin:0 0;">Merge Cells</div>
<div class='tx' style="left:688.8px;top:505.13px;font-family:'Liberation Sans';font-size:10.5px;font-weight:normal;color:#444;line-height:12.07px;transform:scaleX(0.9313);transform-origin:0 0;">Border Styles</div>
<div class='tx' style="left:688.8px;top:529.23px;font-family:'Liberation Sans';font-size:10.5px;font-weight:normal;color:#444;line-height:12.07px;transform:scaleX(0.9605);transform-origin:0 0;">Text Direction...</div>
<div class='tx' style="left:688.8px;top:554.03px;font-family:'Liberation Sans';font-size:10.5px;font-weight:normal;color:#444;line-height:12.07px;transform:scaleX(0.9452);transform-origin:0 0;">Table Properties...</div>
<div class='tx' style="left:688.8px;top:580.53px;font-family:'Liberation Sans';font-size:10.5px;font-weight:normal;color:#444;line-height:12.07px;transform:scaleX(0.9635);transform-origin:0 0;">New Comment</div>
<div class='tx' style="left:674px;top:527.63px;font-family:'Liberation Sans';font-size:8px;font-weight:bold;color:#3a8fc8;line-height:9.2px;">A</div><svg class="a" style="left:0;top:0" width="1200" height="675"><rect x="651" y="545" width="196" height="33.6" fill="none" stroke="#e31b1b" stroke-width="6"/><path d="M656.5 261.3 v12 l2.8 -2.6 l2.1 4.3 l1.8 -0.8 l-2 -4.2 h4 z" fill="#fff" stroke="#000" stroke-width="1.2"/><defs><radialGradient id="yg"><stop offset="0.8" stop-color="#f5f01e" stop-opacity="0.74"/><stop offset="1" stop-color="#f5f01e" stop-opacity="0"/></radialGradient></defs><circle cx="656.5" cy="261.5" r="17.5" fill="url(#yg)"/></svg>
<div class="a" style="left:0;top:0;width:1200px;height:675px;clip-path:inset(0 109px 0 108px)"><svg class="a" style="left:0;top:0" width="1200" height="675"><rect x="108" y="655" width="983" height="20" fill="#f4f4f0"/><rect x="108" y="655" width="983" height="1" fill="#e2e2e2"/><rect x="169.5" y="660" width="10.5" height="10" fill="none" stroke="#666" stroke-width="1"/><path d="M169.5 663 h10.5" stroke="#666" stroke-width="1"/><circle cx="177" cy="668" r="3" fill="#fff" stroke="#444" stroke-width="1"/><circle cx="177" cy="668" r="1.2" fill="#444"/><circle cx="202" cy="661" r="2" fill="none" stroke="#666" stroke-width="1"/><path d="M196.5 664 h11 M202 664 v4 l-3 4 M202 668 l3 4 M204 668.5 l4 3.5 M208 668.5 l-4 3.5" fill="none" stroke="#666" stroke-width="1"/><rect x="866.5" y="659.5" width="12" height="8.5" fill="none" stroke="#666" stroke-width="1"/><circle cx="876.5" cy="669" r="2.8" fill="#f2f2f0" stroke="#555" stroke-width="1"/><path d="M958.5 662 v-2.5 h2.5 M967.5 659.5 h2.5 v2.5 M970 669 v2.5 h-2.5 M961 671.5 h-2.5 v-2.5" fill="none" stroke="#666" stroke-width="1"/><path d="M961 660.5 h5 l2 2 v8 h-7 z" fill="none" stroke="#555" stroke-width="1"/><path d="M1016.5 660 h5 v10.5 h-5 z M1021.5 660 h5 v10.5 h-5 z" fill="none" stroke="#666" stroke-width="1"/><path d="M1018 663 h2 M1018 666 h2 M1023 663 h2 M1023 666 h2" stroke="#888" stroke-width="0.8"/><rect x="1039" y="656" width="33.5" height="19" fill="#d6d6d6"/><rect x="1051.5" y="659.5" width="9.5" height="11.5" fill="none" stroke="#666" stroke-width="1"/><path d="M1053 666 h6.5 M1053 668.5 h6.5" stroke="#888" stroke-width="0.8"/><rect x="1084.5" y="659.5" width="9" height="11.5" fill="none" stroke="#666" stroke-width="1"/></svg><div class='tx' style="left:102.5px;top:659.29px;font-family:'Liberation Sans';font-size:10px;font-weight:normal;color:#555;line-height:11.5px;transform:scaleX(0.9498);transform-origin:0 0;">Vietnamese</div>
<div class='tx' style="left:211px;top:659.29px;font-family:'Liberation Sans';font-size:10px;font-weight:normal;color:#555;line-height:11.5px;transform:scaleX(0.8672);transform-origin:0 0;">Accessibility: Investigate</div>
<div class='tx' style="left:880.5px;top:659.29px;font-family:'Liberation Sans';font-size:10px;font-weight:normal;color:#555;line-height:11.5px;transform:scaleX(0.8716);transform-origin:0 0;">Display Settings</div>
<div class='tx' style="left:972.5px;top:659.29px;font-family:'Liberation Sans';font-size:10px;font-weight:normal;color:#555;line-height:11.5px;transform:scaleX(0.7894);transform-origin:0 0;">Focus</div></div>
</body></html>
